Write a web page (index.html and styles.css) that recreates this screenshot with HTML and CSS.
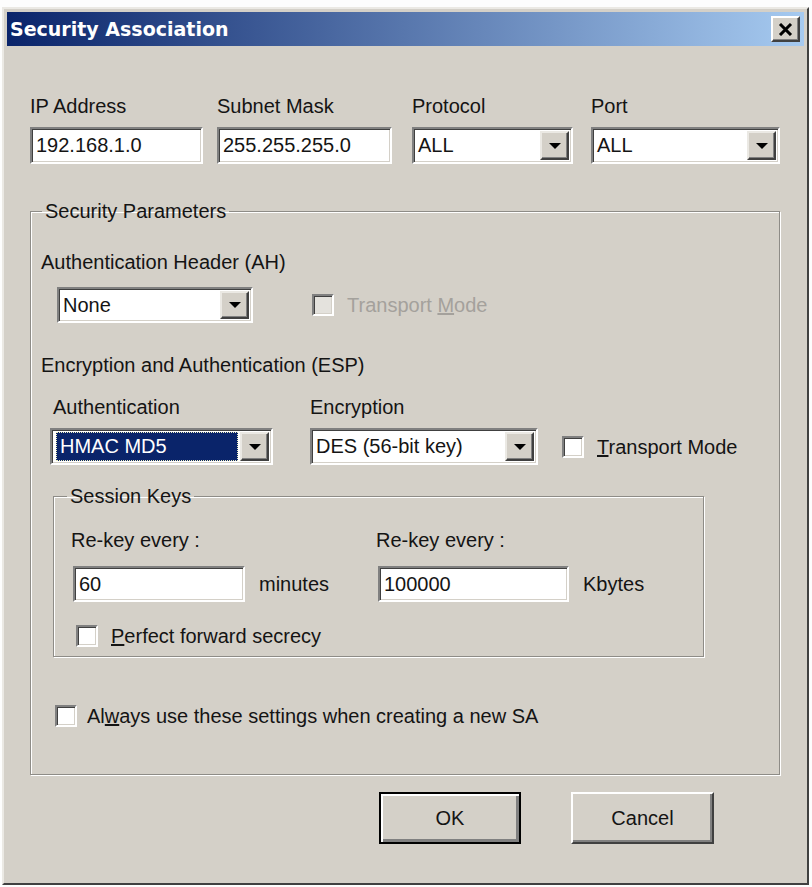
FILE: index.html
```html
<html lang="en">
<head>
    <meta charset="UTF-8">
    <title>Security Association</title>
    <link rel="stylesheet" href="styles.css">
</head>
<body>
    <div class="window">
        <div class="titlebar">
            <span class="title">Security Association</span>
            <span class="close">
                <svg width="15" height="13" viewBox="0 0 15 13">
                    <path d="M2 1 L13 12 M13 1 L2 12" stroke="#000" stroke-width="3"/>
                </svg>
            </span>
        </div>

        <div class="content">
            <div class="addr-row">
                <div class="field">
                    <span class="lbl">IP Address</span>
                    <div class="edit w-ip">192.168.1.0</div>
                </div>
                <div class="field">
                    <span class="lbl">Subnet Mask</span>
                    <div class="edit w-mask">255.255.255.0</div>
                </div>
                <div class="field">
                    <span class="lbl">Protocol</span>
                    <div class="combo w-proto"><span class="val">ALL</span><span class="drop"></span></div>
                </div>
                <div class="field">
                    <span class="lbl">Port</span>
                    <div class="combo w-port"><span class="val">ALL</span><span class="drop"></span></div>
                </div>
            </div>

            <fieldset class="group params">
                <legend>Security Parameters</legend>

                <div class="lbl">Authentication Header (AH)</div>
                <div class="ah-row">
                    <div class="combo w-none"><span class="val">None</span><span class="drop"></span></div>
                    <label class="check disabled"><span class="box"></span><span>Transport <u>M</u>ode</span></label>
                </div>

                <div class="lbl esp-title">Encryption and Authentication (ESP)</div>
                <div class="esp-row">
                    <div class="field f-auth">
                        <span class="lbl">Authentication</span>
                        <div class="combo w-hmac"><span class="val"><span class="sel">HMAC MD5</span></span><span class="drop"></span></div>
                    </div>
                    <div class="field f-enc">
                        <span class="lbl">Encryption</span>
                        <div class="combo w-des"><span class="val">DES (56-bit key)</span><span class="drop"></span></div>
                    </div>
                    <label class="check esp-check"><span class="box"></span><span><u>T</u>ransport Mode</span></label>
                </div>

                <fieldset class="group keys">
                    <legend>Session Keys</legend>
                    <div class="keys-grid">
                        <span class="lbl">Re-key every :</span>
                        <span></span>
                        <span class="lbl">Re-key every :</span>
                        <span></span>
                        <div class="edit">60</div>
                        <span class="unit">minutes</span>
                        <div class="edit">100000</div>
                        <span class="unit">Kbytes</span>
                    </div>
                    <label class="check pfs"><span class="box"></span><span><u>P</u>erfect forward secrecy</span></label>
                </fieldset>

                <label class="check always"><span class="box"></span><span>Al<u>w</u>ays use these settings when creating a new SA</span></label>
            </fieldset>

            <div class="buttons">
                <button class="btn default">OK</button>
                <button class="btn">Cancel</button>
            </div>
        </div>
    </div>
</body>
</html>
```

FILE: styles.css
```css
* {
    box-sizing: border-box;
}

body {
    margin: 0;
    background: #fdfdfd;
    font-family: "Liberation Sans", Arial, sans-serif;
    font-size: 20px;
    color: #141414;
}

.window {
    margin: 7px 3px 0 2px;
    height: 878px;
    padding: 3px;
    background: #d4d0c8;
    border: 2px solid;
    border-color: #ebe9e4 #404040 #404040 #ebe9e4;
}

.titlebar {
    height: 34px;
    display: flex;
    align-items: center;
    justify-content: space-between;
    padding: 0 4px 0 3px;
    background: linear-gradient(to right, #0a246a, #a6caf0);
}

.title {
    font-family: "DejaVu Sans", sans-serif;
    font-weight: bold;
    font-size: 19px;
    color: #fff;
}

.close {
    width: 29px;
    height: 26px;
    display: flex;
    align-items: center;
    justify-content: center;
    background: #d4d0c8;
    border: 2px solid;
    border-color: #fff #404040 #404040 #fff;
    box-shadow: inset -1px -1px #808080;
}

.content {
    padding: 48px 0 0 23px;
}

.lbl {
    line-height: 24px;
    white-space: nowrap;
}

.field {
    display: flex;
    flex-direction: column;
    gap: 9px;
}

.addr-row {
    display: grid;
    grid-template-columns: 187px 195px 179px auto;
}

/* sunken edit and combo boxes */
.edit, .combo {
    height: 37px;
    background: #fff;
    border: 2px solid;
    border-color: #808080 #fff #fff #808080;
    box-shadow: inset 1px 1px #404040, inset -1px -1px #d4d0c8;
}

.edit {
    padding: 0 4px;
    line-height: 33px;
}

.combo {
    display: flex;
    padding: 2px;
}

.combo .val {
    flex: 1;
    padding-left: 2px;
    line-height: 29px;
    white-space: nowrap;
}

.combo .drop {
    width: 29px;
    display: flex;
    align-items: center;
    justify-content: center;
    background: #d4d0c8;
    border: 2px solid;
    border-color: #ebe9e4 #404040 #404040 #ebe9e4;
    box-shadow: inset -1px -1px #808080;
}

.combo .drop::after {
    content: "";
    border-left: 6px solid transparent;
    border-right: 6px solid transparent;
    border-top: 6px solid #000;
}

.w-ip { width: 173px; }
.w-mask { width: 175px; }
.w-proto { width: 161px; }
.w-port { width: 189px; }
.w-none { width: 196px; height: 36px; }
.w-hmac { width: 223px; }
.w-des { width: 228px; }

.combo .sel {
    display: inline-block;
    width: 182px;
    height: 29px;
    padding-left: 3px;
    line-height: 27px;
    background: #0a246a;
    color: #fff;
    border: 1px dotted #f0f0c0;
}

/* group boxes */
.group {
    margin: 0;
    min-inline-size: 0;
    border: 1px solid #8e8c87;
    box-shadow: 1px 1px 0 #fff, inset 1px 1px 0 #fff;
}

.group legend {
    padding: 0 3px;
    line-height: 24px;
}

.params {
    width: 750px;
    margin-top: 35px;
    padding: 27px 10px 46px 10px;
}

.params > legend {
    margin-left: 1px;
}

.ah-row {
    display: flex;
    align-items: center;
    margin-top: 13px;
}

.ah-row .combo {
    margin-left: 16px;
}

.ah-row .check {
    margin-left: 59px;
}

.esp-title {
    margin-top: 30px;
}

.esp-row {
    display: flex;
    align-items: flex-end;
    margin-top: 18px;
}

.f-auth {
    margin-left: 9px;
}

.f-auth .lbl {
    padding-left: 3px;
}

.f-enc {
    margin-left: 37px;
}

.esp-check {
    height: 37px;
    margin-left: 24px;
    gap: 16px;
}

.keys {
    width: 651px;
    margin-top: 19px;
    margin-left: 12px;
    padding: 20px 10px 8px 19px;
}

.keys > legend {
    margin-left: -6px;
}

.keys-grid {
    display: grid;
    grid-template-columns: 172px 133px 191px auto;
    row-gap: 14px;
    align-items: center;
}

.keys-grid .edit {
    height: 36px;
}

.keys-grid .lbl {
    margin-left: -2px;
}

.unit {
    padding-left: 14px;
}

/* check boxes */
.check {
    display: flex;
    align-items: center;
    gap: 13px;
    line-height: 24px;
    white-space: nowrap;
}

.box {
    width: 22px;
    height: 22px;
    background: #fff;
    border: 2px solid;
    border-color: #808080 #fff #fff #808080;
    box-shadow: inset 1px 1px #404040, inset -1px -1px #d4d0c8;
}

.check.disabled {
    color: #a4a19c;
}

.check.disabled .box {
    background: #e4e2dd;
}

.pfs {
    margin-top: 22px;
    margin-left: 3px;
}

.always {
    margin-top: 47px;
    margin-left: 14px;
    gap: 10px;
}

/* buttons */
.buttons {
    display: flex;
    gap: 50px;
    margin-top: 17px;
    padding-left: 349px;
}

.btn {
    width: 143px;
    height: 52px;
    padding: 0;
    font: inherit;
    color: inherit;
    background: #d4d0c8;
    border: 2px solid;
    border-color: #fff #404040 #404040 #fff;
    box-shadow: inset -2px -2px #808080;
}

.btn.default {
    width: 142px;
    border-color: #000;
    box-shadow: inset 2px 2px #fff, inset -3px -3px #808080;
}
```
